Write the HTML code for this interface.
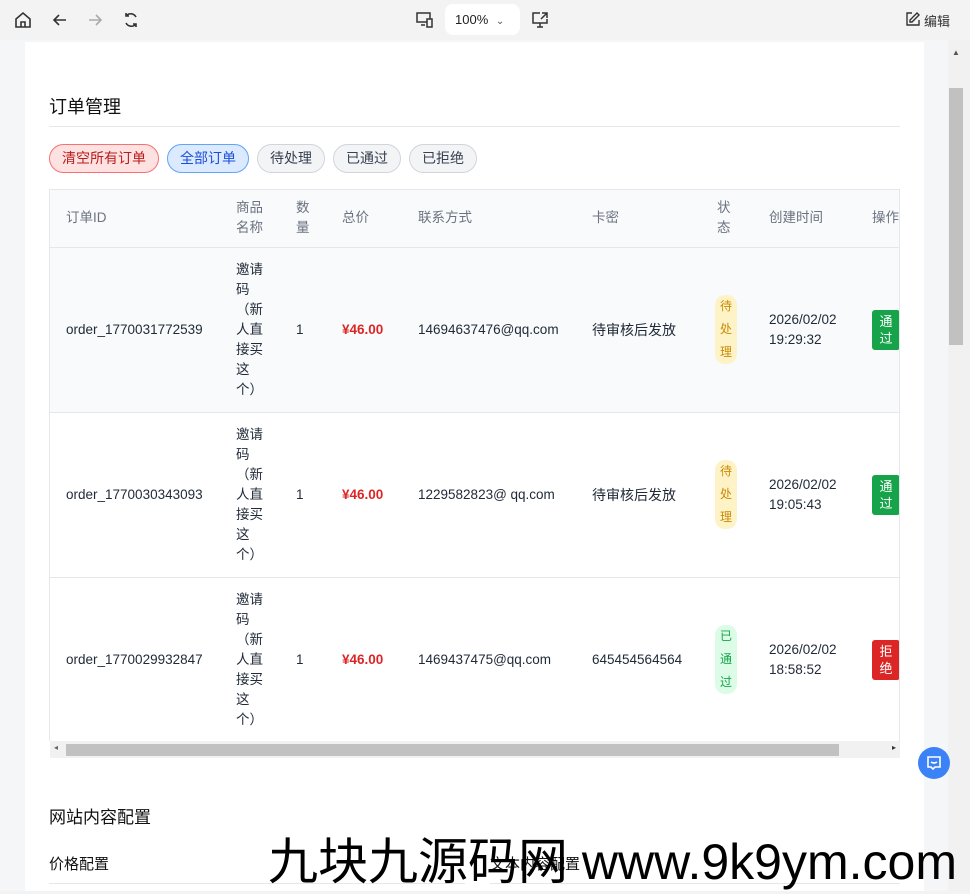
<!DOCTYPE html>
<html><head><meta charset="utf-8"><style>
*{box-sizing:border-box;margin:0;padding:0}
body{width:970px;height:891px;overflow:hidden;background:#f3f3f3;font-family:"Liberation Sans","Noto Sans CJK SC",sans-serif;color:#1f2937;position:relative}
.tb{position:absolute;left:0;top:0;width:970px;height:40px;background:#f3f3f3}
.ic{position:absolute;top:10px}
.zoom{position:absolute;left:445px;top:4px;width:75px;height:31px;background:#fff;border-radius:8px;font-size:13px;line-height:31px;padding-left:10px;color:#222}
.page{position:absolute;left:0;top:40px;width:948px;height:851px;background:#f5f6f8}
.card{position:absolute;left:25px;top:42px;width:899px;height:849px;background:#fff}
.sb{position:absolute;left:948px;top:40px;width:22px;height:851px;background:#f1f1f1}
.thumb{position:absolute;left:949px;top:88px;width:14px;height:257px;background:#c1c1c1}
h2{position:absolute;font-size:18px;font-weight:normal;color:#111}
.hr{position:absolute;height:1px;background:#e5e7eb}
.btn{position:absolute;top:144px;height:29px;border-radius:15px;font-size:14px;line-height:27px;text-align:center;border:1px solid #d1d5db;background:#f3f4f6;color:#374151}
.tw{position:absolute;left:49px;top:189px;width:851px;height:552px;overflow:hidden;border:1px solid #e5e7eb;border-bottom:none}
table{border-collapse:collapse;table-layout:fixed;width:900px;font-size:13.5px}
th{font-weight:normal;color:#6b7280;text-align:left;padding:0 16px;height:57px;line-height:20px;background:#f9fafb;border-bottom:1px solid #e5e7eb}
td{padding:0 16px;height:165px;line-height:20px;border-bottom:1px solid #e5e7eb;vertical-align:middle;color:#1f2937}
tr.h td{background:#f9fafb}
.pr{color:#dc2626;font-weight:bold}
.bd{display:inline-block;font-size:12px;line-height:23px;background:#fef3c7;color:#ca8a04;border-radius:10px;padding:0 2px;width:22px;text-align:center}
.bd.g{background:#dcfce7;color:#16a34a}
.op{display:inline-block;width:28px;height:40px;border-radius:3px;background:#16a34a;color:#fff;font-size:13px;line-height:17px;padding-top:3px;text-align:center}
.op.r{background:#dc2626}
.hs{position:absolute;left:50px;top:741px;width:850px;height:17px;background:#f1f1f1}
.hs i{position:absolute;left:16px;top:3px;width:773px;height:12px;background:#c1c1c1}
.wm{position:absolute;left:268px;top:822px;font-size:50px;color:#000;white-space:nowrap}
</style></head><body>
<div class="tb">
<svg class="ic" style="left:13px" width="20" height="20" viewBox="0 0 20 20" fill="none" stroke="#333" stroke-width="1.6"><path d="M3 9l7-6 7 6v8H3z"/><path d="M8 17v-5h4v5"/></svg>
<svg class="ic" style="left:50px" width="20" height="20" viewBox="0 0 20 20" fill="none" stroke="#333" stroke-width="1.6"><path d="M16 10H4M9 5l-5 5 5 5"/></svg>
<svg class="ic" style="left:85px" width="20" height="20" viewBox="0 0 20 20" fill="none" stroke="#aaa" stroke-width="1.6"><path d="M4 10h12M11 5l5 5-5 5"/></svg>
<svg class="ic" style="left:121px" width="20" height="20" viewBox="0 0 20 20" fill="none" stroke="#333" stroke-width="1.6"><path d="M15 7a6 6 0 0 0-10-1M5 13a6 6 0 0 0 10 1M5 3v3h3M15 17v-3h-3"/></svg>
<svg class="ic" style="left:415px" width="20" height="20" viewBox="0 0 20 20" fill="none" stroke="#333" stroke-width="1.5"><rect x="2" y="3" width="13" height="9"/><path d="M6 15h4"/><rect x="12" y="9" width="5" height="8" fill="#f3f3f3"/></svg>
<div class="zoom">100% <span style="font-size:10px;color:#555;margin-left:4px">&#8964;</span></div>
<svg class="ic" style="left:530px" width="20" height="20" viewBox="0 0 20 20" fill="none" stroke="#333" stroke-width="1.5"><path d="M10 3H3v10h14V9M7 17h6M10 13v4M12 3h5v5M17 3l-6 6"/></svg>
<svg class="ic" style="left:905px;top:11px" width="16" height="16" viewBox="0 0 16 16" fill="none" stroke="#333" stroke-width="1.4"><path d="M7 2H2v12h12V9"/><path d="M12 2l2 2-7 7H5V9z"/></svg>
<div style="position:absolute;left:924px;top:11px;font-size:13px;color:#333">编辑</div>
</div>
<div class="page"></div>
<div class="card"></div>
<div class="sb"></div><div class="thumb"></div>
<div style="position:absolute;left:952px;top:48px;font-size:8px;color:#555">▲</div>
<h2 style="left:49px;top:93px">订单管理</h2>
<div class="hr" style="left:49px;top:126px;width:851px"></div>
<div class="btn" style="left:49px;width:110px;background:#fee2e2;border-color:#f87171;color:#b91c1c">清空所有订单</div>
<div class="btn" style="left:167px;width:82px;background:#dbeafe;border-color:#60a5fa;color:#1d4ed8">全部订单</div>
<div class="btn" style="left:257px;width:68px">待处理</div>
<div class="btn" style="left:333px;width:68px">已通过</div>
<div class="btn" style="left:409px;width:68px">已拒绝</div>
<div class="tw"><table>
<colgroup><col style="width:170px"><col style="width:60px"><col style="width:46px"><col style="width:76px"><col style="width:174px"><col style="width:125px"><col style="width:52px"><col style="width:103px"><col style="width:94px"></colgroup>
<tr><th>订单ID</th><th>商品<br>名称</th><th>数<br>量</th><th>总价</th><th>联系方式</th><th>卡密</th><th>状<br>态</th><th>创建时间</th><th>操作</th></tr>
<tr class="h"><td>order_1770031772539</td><td>邀请<br>码<br>（新<br>人直<br>接买<br>这<br>个）</td><td>1</td><td class="pr">¥46.00</td><td>14694637476@qq.com</td><td style="font-size:14px">待审核后发放</td><td style="padding:0 0 0 14px"><span class="bd">待<br>处<br>理</span></td><td>2026/02/02<br>19:29:32</td><td><span class="op">通<br>过</span></td></tr>
<tr><td>order_1770030343093</td><td>邀请<br>码<br>（新<br>人直<br>接买<br>这<br>个）</td><td>1</td><td class="pr">¥46.00</td><td>1229582823@ qq.com</td><td style="font-size:14px">待审核后发放</td><td style="padding:0 0 0 14px"><span class="bd">待<br>处<br>理</span></td><td>2026/02/02<br>19:05:43</td><td><span class="op">通<br>过</span></td></tr>
<tr><td>order_1770029932847</td><td>邀请<br>码<br>（新<br>人直<br>接买<br>这<br>个）</td><td>1</td><td class="pr">¥46.00</td><td>1469437475@qq.com</td><td>645454564564</td><td style="padding:0 0 0 14px"><span class="bd g">已<br>通<br>过</span></td><td>2026/02/02<br>18:58:52</td><td><span class="op r">拒<br>绝</span></td></tr>
</table></div>
<div class="hs"><i></i><span style="position:absolute;left:4px;top:2px;font-size:8px;color:#666">◂</span><span style="position:absolute;right:4px;top:2px;font-size:8px;color:#333">▸</span></div>
<div style="position:absolute;left:918px;top:747px;width:32px;height:32px;border-radius:50%;background:#3b82f6"><svg width="32" height="32" viewBox="0 0 32 32" fill="none" stroke="#fff" stroke-width="1.6"><path d="M10 10h12v10h-5l-2 2-2-2h-3z"/><path d="M13 15q3 2 6 0"/></svg></div>
<h2 style="left:49px;top:803px;font-size:17px">网站内容配置</h2>
<div style="position:absolute;left:49px;top:853px;font-size:15px;color:#111">价格配置</div>
<div style="position:absolute;left:490px;top:853px;font-size:15px;color:#111">文本内容配置</div>
<div class="hr" style="left:49px;top:883px;width:416px"></div>
<div class="hr" style="left:490px;top:883px;width:410px"></div>
<div class="wm">九块九源码网 www.9k9ym.com</div>
</body></html>
